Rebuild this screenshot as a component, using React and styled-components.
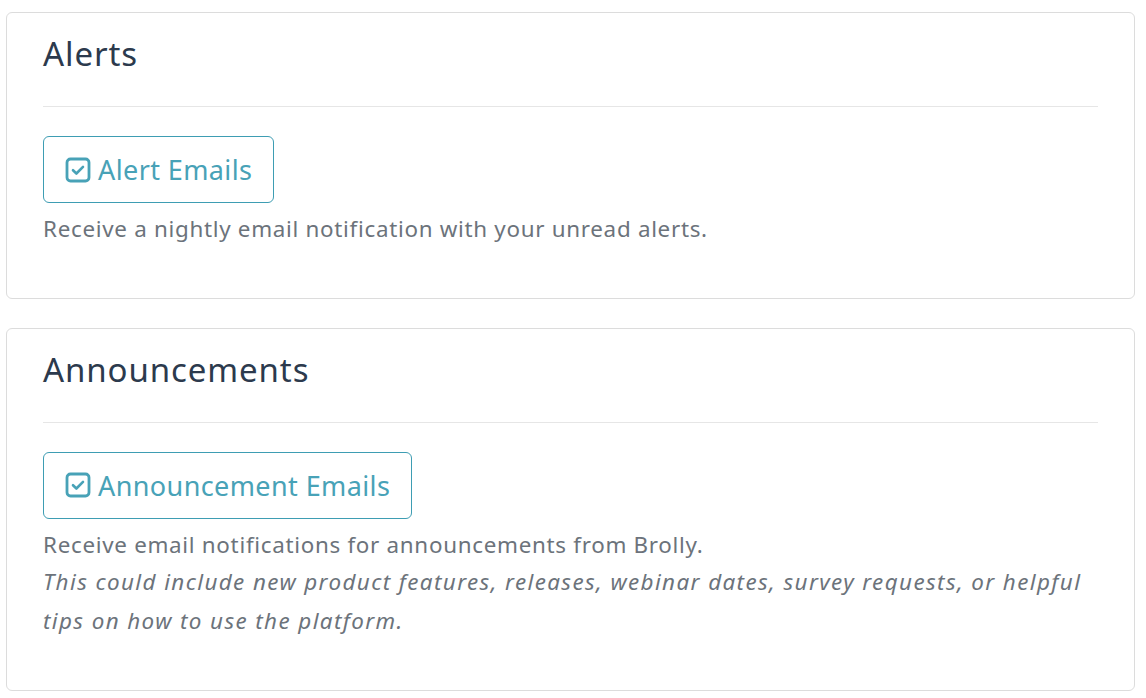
import React from 'react';
import styled, {createGlobalStyle} from 'styled-components';

const GlobalStyle = createGlobalStyle`
  body {
    margin: 0;
    background: #fff;
    font-family: "Noto Sans", "Open Sans", sans-serif;
  }
`;

const sections = [
  {
    title: 'Alerts',
    button: 'Alert Emails',
    desc: 'Receive a nightly email notification with your unread alerts.',
  },
  {
    title: 'Announcements',
    button: 'Announcement Emails',
    desc: 'Receive email notifications for announcements from Brolly.',
    note: 'This could include new product features, releases, webinar dates, survey requests, or helpful tips on how to use the platform.',
  },
];

function CheckIcon() {
  return (
    <svg width="26" height="26" viewBox="0 0 26 26" fill="none">
      <rect x="2" y="2" width="22" height="22" rx="3.5" stroke="currentColor" strokeWidth="2.8" />
      <path d="M8 13.2l3.4 3.3 6.6-6.6" stroke="currentColor" strokeWidth="2.6" strokeLinecap="round" strokeLinejoin="round" />
    </svg>
  );
}

export default function App() {
  return (
    <Page>
      <GlobalStyle />
      {sections.map((s) => (
        <Card key={s.title}>
          <Title>{s.title}</Title>
          <Divider />
          <Toggle type="button">
            <CheckIcon />
            <span>{s.button}</span>
          </Toggle>
          <Description>
            {s.desc}
            {s.note && <Note>{s.note}</Note>}
          </Description>
        </Card>
      ))}
    </Page>
  );
}

const Page = styled.div`
  display: flex;
  flex-direction: column;
  gap: 29px;
  padding: 12px 11px 8px 6px;
`;

const Card = styled.section`
  border: 1px solid #dcdcdc;
  border-radius: 6px;
  padding: 21px 36px 50px 36px;
`;

const Title = styled.h2`
  margin: 0;
  font-size: 33px;
  font-weight: 400;
  line-height: 40px;
  letter-spacing: 0.9px;
  color: #2c3a4d;
`;

const Divider = styled.hr`
  border: 0;
  border-top: 1px solid #e6e6e6;
  margin: 32px 0 29px;
`;

const Toggle = styled.button`
  display: inline-flex;
  align-items: center;
  gap: 7px;
  height: 67px;
  padding: 0 21px;
  border: 1px solid #3e9db3;
  border-radius: 6px;
  background: #fff;
  color: #48a2b7;
  font-family: inherit;
  font-size: 27px;
  letter-spacing: 0.4px;
  cursor: pointer;
`;

const Description = styled.div`
  margin-top: 7px;
  font-size: 22.4px;
  line-height: 37.5px;
  letter-spacing: 0.7px;
  color: #6c737b;
`;

const Note = styled.div`
  font-style: italic;
  line-height: 38.5px;
  letter-spacing: 1.4px;
`;
